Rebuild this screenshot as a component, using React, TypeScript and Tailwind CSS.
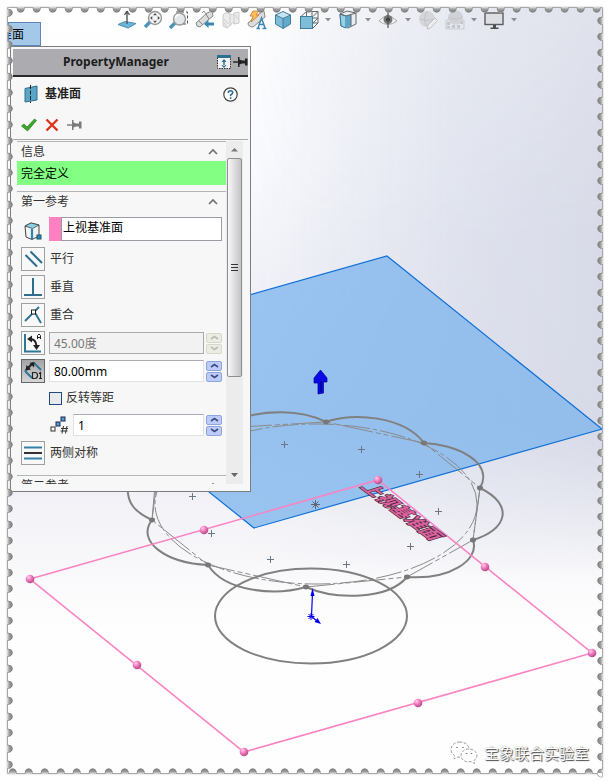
import React from "react"
import clsx from "clsx"

const WIDTH = 609
const HEIGHT = 781
const LEFT = 8
const TOP = 8
const RIGHT = 602
const BOTTOM = 773

// outline of the sheet with a round notch every 16px
const stampOutline = () => {
  let d = `M${LEFT} ${TOP}`
  for (let x = 16.7; x < RIGHT - 4; x += 16) d += `H${x}a4 4.6 0 0 0 8 0`
  d += `H${RIGHT}`
  for (let y = 16.7; y < BOTTOM - 4; y += 16) d += `V${y}a4.6 4 0 0 0 0 8`
  d += `V${BOTTOM}`
  for (let x = 584.7 + 8; x > LEFT + 8; x -= 16) d += `H${x}a4 4.6 0 0 0 -8 0`
  d += `H${LEFT}`
  for (let y = 752.7 + 16; y > TOP + 8; y -= 16) d += `V${y}a4.6 4 0 0 0 0 -8`
  return d + "Z"
}

const outline = stampOutline()

const StampFrame: React.FC = () => (
  <svg
    className="absolute inset-0 h-full w-full pointer-events-none"
    viewBox={`0 0 ${WIDTH} ${HEIGHT}`}
    preserveAspectRatio="none"
    aria-hidden="true"
  >
    <defs>
      <clipPath id="outside">
        <path
          d={`M0 0H${WIDTH}V${HEIGHT}H0Z${outline}`}
          clipRule="evenodd"
        />
      </clipPath>
      <filter id="soft">
        <feGaussianBlur stdDeviation="1.7" />
      </filter>
    </defs>
    <g clipPath="url(#outside)">
      <rect width={WIDTH} height={HEIGHT} fill="#fff" />
      <rect
        x={LEFT}
        y={TOP}
        width={RIGHT - LEFT}
        height={BOTTOM - TOP}
        fill="#8c8c8c"
        filter="url(#soft)"
      />
      <path
        d={outline}
        fill="none"
        stroke="#6a6a6a"
        strokeOpacity="0.55"
        strokeWidth="1.6"
      />
    </g>
  </svg>
)

const nodes = [
  [326, 422],
  [424, 443],
  [480, 488],
  [473, 540],
  [407, 577],
  [306, 587],
  [208, 565],
  [152, 520],
]

const crosses = [
  [284, 444],
  [361, 449],
  [419, 474],
  [438, 511],
  [410, 546],
  [346, 564],
  [270, 559],
  [211, 533],
  [192, 496],
]

const handles = [
  [30, 579],
  [204, 530],
  [378, 480],
  [485, 567],
  [592, 653],
  [418, 703],
  [244, 752],
  [137, 665],
]

const Scene: React.FC = () => (
  <svg
    className="absolute inset-0 h-full w-full"
    viewBox={`0 0 ${WIDTH} ${HEIGHT}`}
    preserveAspectRatio="xMinYMin slice"
    aria-hidden="true"
  >
    <defs>
      <linearGradient id="sky" x1="0" y1="0" x2="0" y2="1">
        <stop offset="0" stopColor="#fff" />
        <stop offset="0.2" stopColor="#fbfcff" />
        <stop offset="0.55" stopColor="#e9eaf3" />
        <stop offset="0.68" stopColor="#f5f5f9" />
        <stop offset="0.8" stopColor="#fefefe" />
      </linearGradient>
      <linearGradient id="side" x1="0" y1="0" x2="1" y2="0">
        <stop offset="0.4" stopColor="#d3d6e4" stopOpacity="0" />
        <stop offset="0.75" stopColor="#d8dce9" stopOpacity="0.75" />
        <stop offset="1" stopColor="#d5d8e5" stopOpacity="0.95" />
      </linearGradient>
      <linearGradient id="fade" x1="0" y1="0" x2="0" y2="1">
        <stop offset="0" stopColor="#ccc" />
        <stop offset="0.3" stopColor="#fff" />
        <stop offset="0.54" stopColor="#fff" />
        <stop offset="0.74" stopColor="#000" />
      </linearGradient>
      <mask id="fadeMask">
        <rect width={WIDTH} height={HEIGHT} fill="url(#fade)" />
      </mask>
      <radialGradient id="ball" cx="0.35" cy="0.3" r="0.8">
        <stop offset="0" stopColor="#ffd0ec" />
        <stop offset="0.4" stopColor="#f47fc0" />
        <stop offset="1" stopColor="#a83c7c" />
      </radialGradient>
    </defs>
    <rect width={WIDTH} height={HEIGHT} fill="url(#sky)" />
    <rect
      width={WIDTH}
      height={HEIGHT}
      fill="url(#side)"
      mask="url(#fadeMask)"
    />

    <path
      d="M387 256L602 429L254 528L38 355Z"
      fill="#7db4ec"
      fillOpacity="0.76"
      stroke="#1070d8"
      strokeWidth="1.2"
    />

    {/* construction lines */}
    <g fill="none" stroke="#8b8b8b" strokeWidth="1">
      <ellipse
        cx="316"
        cy="504"
        rx="161"
        ry="80"
        strokeDasharray="26 3 4 3"
      />
      <path
        d="M240 427L326 422L424 443L480 488L473 540L407 577L306 587L208 565L152 520L155 485"
        strokeDasharray="32 3 5 3 5 3"
      />
      <path d="M480 488L473 540M152 520L156 488" />
    </g>

    {/* flower profile and base circle */}
    <g fill="none" stroke="#808080" strokeWidth="2">
      <path d="M240 419C262 410 301 409 326 422C352 412 404 416 424 443C455 444 495 462 480 488C515 505 507 530 473 540C480 560 450 580 407 577C388 600 335 600 306 587C275 596 225 592 208 565C165 563 136 541 152 520C135 512 126 503 128 485" />
      <ellipse cx="311" cy="616" rx="96" ry="47.5" />
    </g>
    {nodes.map(([x, y]) => (
      <ellipse key={`${x}-${y}`} cx={x} cy={y} rx="3" ry="2.4" fill="#777" />
    ))}
    {crosses.map(([x, y]) => (
      <path
        key={`${x}-${y}`}
        d={`M${x - 3} ${y + 0.5}h7M${x + 0.5} ${y - 3}v7`}
        stroke="#6d7684"
        strokeWidth="1"
      />
    ))}
    <path
      d="M311 504.500h9M315.500 500v9M312.500 501.500l6 6M318.500 501.500l-6 6"
      stroke="#5f6670"
    />

    <path
      d="M30 579L378 480L592 653L244 752Z"
      fill="none"
      stroke="#fd82c2"
      strokeWidth="1.6"
    />
    {handles.map(([x, y]) => (
      <circle key={`${x}-${y}`} cx={x} cy={y} r="4.3" fill="url(#ball)" />
    ))}

    {/* plane label lies in the plane */}
    <text
      transform="matrix(0.8 0.6 -1 0.31 360 487)"
      x="0 18 36 54 72"
      className="font-['Noto_Sans_CJK_SC',sans-serif] text-[18px] font-bold [paint-order:stroke]"
      fill="#dd62a0"
      stroke="#4a2a3c"
      strokeWidth="1.6"
    >
      上视基准面
    </text>

    <path
      d="M320.500 370L327 378V382H323.500V393L318 394V383H314V378Z"
      fill="#0a0ae8"
      stroke="#000090"
      strokeWidth="0.7"
    />
    <path d="M321 381V392" stroke="#000060" />
    <g stroke="#0000f0" fill="#0000f0">
      <path d="M311.500 616L312.500 593M311 616L317 621" strokeWidth="1.2" />
      <path d="M312.500 588L314.500 596H310.500Z" stroke="none" />
      <path d="M321 624L314.500 622L317.500 618Z" stroke="none" />
      <path d="M307.500 616.500h7M311 613v7M308.500 614l5 5M313.500 614l-5 5" />
    </g>
  </svg>
)

interface IconProps {
  size?: number
  children: React.ReactNode
}

const Icon: React.FC<IconProps> = ({ size = 20, children }) => (
  <svg
    width={size}
    height={size}
    viewBox={`0 0 ${size} ${size}`}
    fill="none"
    className="shrink-0"
    aria-hidden="true"
  >
    {children}
  </svg>
)

const NormalToIcon = () => (
  <Icon>
    <path d="M1 14.500L8 11.500L19 13.500L11 18Z" fill="#6cb5da" stroke="#4a8fb4" />
    <path d="M10 14V2M10 1L7.500 5M10 1L12.500 5" stroke="#555" strokeWidth="1.4" />
  </Icon>
)

const ZoomFitIcon = () => (
  <Icon>
    <path d="M7 12L2 17" stroke="#4b93bb" strokeWidth="3.4" />
    <circle cx="12" cy="8" r="6.500" fill="#f3f5f6" stroke="#999" strokeWidth="1.4" />
    <path
      d="M12 3l2 2.300h-4zM12 13l2-2.300h-4zM7 8l2.300-2v4zM17 8l-2.300-2v4z"
      fill="#555"
    />
  </Icon>
)

const ZoomAreaIcon = () => (
  <Icon>
    <path d="M7 2H18.500V14H9" stroke="#555" strokeDasharray="3 2" />
    <path d="M6 13L1 18" stroke="#4b93bb" strokeWidth="3.4" />
    <circle cx="10.500" cy="9" r="6" fill="#e4e7e9" stroke="#999" strokeWidth="1.4" />
    <path d="M6.500 8a4 4 0 0 1 4-3.500" stroke="#fff" strokeWidth="1.6" />
  </Icon>
)

const PreviousViewIcon = () => (
  <Icon>
    <path
      d="M1 13L12 3L17 1L18 6L13 10L5 17Q1 17 1 13Z"
      fill="#dcdcdc"
      stroke="#888"
    />
    <path d="M11 4L14 9M4 11L8 15" stroke="#888" />
    <path d="M7 3L9 1L11 4" stroke="#999" />
    <path d="M9 14L13.500 10V12.500H19V15.500H13.500V18Z" fill="#3c87b2" />
  </Icon>
)

const SectionIcon = () => (
  <Icon>
    <path
      d="M2 5Q5 1 9 4Q12 6 13 3L18 2V13L13 14Q12 10 10 15L6 18L2 16Z"
      fill="#ececec"
      stroke="#ccc"
    />
    <path d="M9 4V15M13 3V14M3 9l4 5M3 13l3 4M14 5l3 4" stroke="#ccc" />
  </Icon>
)

const DynamicViewsIcon = () => (
  <Icon>
    <path d="M1 13L12 4L17 1L18 7L6 17Q1 17 1 13Z" fill="#dcdcdc" stroke="#888" />
    <path d="M6 1H12L9 5H12L4 12L6 6H3Z" fill="#ffc15a" stroke="#d0762c" strokeWidth="0.8" />
    <path
      d="M9.500 18.500h3.500M15.500 18.500h4M11 18L14.500 8L18 18M12.500 14.500h4"
      stroke="#3c87b2"
      strokeWidth="1.5"
    />
  </Icon>
)

const CubeIcon = () => (
  <Icon>
    <path d="M10 1.500L17.500 5L10 8.500L2.500 5Z" fill="#c5e4f0" />
    <path d="M2.500 5L10 8.500V18.500L2.500 14Z" fill="#7fbcd8" />
    <path d="M17.500 5L10 8.500V18.500L17.500 14Z" fill="#62a9ca" />
    <path
      d="M10 1.500L17.500 5V14L10 18.500L2.500 14V5ZM2.500 5L10 8.500L17.500 5M10 8.500V18.500"
      stroke="#3f7d9c"
    />
  </Icon>
)

const ViewOrientationIcon = () => (
  <Icon>
    <path d="M7.500 1.500H19V13H13M2 6.500L7.500 1.500M14 6.500L19 1.500M13 1.500V13M7.500 7V1.500M14 13L19 8M13 8H19M14 18L19 13" stroke="#666" />
    <rect x="1.500" y="6.500" width="12" height="12" fill="#7fbcd8" stroke="#3f7d9c" />
  </Icon>
)

const DisplayStyleIcon = () => (
  <Icon>
    <path d="M2 4L9 1L18 3V14L10 18L3 16Z" fill="#e8eff3" stroke="#666" />
    <path d="M2 4L8 6V18L3 16Z" fill="#9ad0e6" stroke="#2f7da2" />
    <path d="M8 6L13 4.500V16L8 18Z" fill="#5ba5c8" />
    <path d="M2 4L8 6L18 3M13 5V16" stroke="#666" />
  </Icon>
)

const EyeIcon = () => (
  <Icon>
    <path d="M1 11Q9 1 19 11Q10 18 1 11Z" fill="#f4f4f4" stroke="#aaa" />
    <circle cx="10" cy="9.500" r="4.500" fill="#777" />
    <circle cx="10" cy="9.500" r="2" fill="#333" />
    <path d="M10 1V18" stroke="#555" strokeWidth="1.2" />
  </Icon>
)

const AppearanceIcon = () => (
  <Icon>
    <circle cx="9" cy="9" r="8" fill="#d4d6dc" />
    <path d="M1.500 9Q9 12 17 9M9 1Q5 8 8 16" stroke="#c2c4ca" />
    <path d="M9 19L10 15L17 8L19.500 10.500L12.500 18Z" fill="#eee" stroke="#bfc1c8" />
  </Icon>
)

const SceneIcon = () => (
  <Icon>
    <path d="M1 10H19V19H1Z" fill="#e6e8ee" stroke="#c9cbd2" />
    <path d="M2 12h3v3h-3zM7 15h3v3h-3zM12 15h3v3h-3zM15 11h3v3h-3zM2 16h3v2h-3z" fill="#c3c5cc" />
    <circle cx="10.500" cy="7.500" r="7.300" fill="#d0d2d8" />
    <path d="M3.500 7.500Q10 11 17.500 7" stroke="#c0c2c9" />
  </Icon>
)

const MonitorIcon = () => (
  <Icon>
    <rect x="1" y="3" width="18" height="11.500" fill="#dcdee2" stroke="#5d5d5d" strokeWidth="1.4" />
    <path d="M9 15h3v2.500h2.500v1.500h-8v-1.500h2.500z" fill="#4d4d4d" />
  </Icon>
)

const Caret: React.FC<{ label: string }> = ({ label }) => (
  <button className="flex h-6 w-3 items-center justify-center" aria-label={label}>
    <svg width="6" height="4" viewBox="0 0 6 4">
      <path d="M0 0h6L3 3.500z" fill="#8d8f94" />
    </svg>
  </button>
)

interface ToolProps {
  label: string
  wide?: boolean
  children: React.ReactNode
}

const Tool: React.FC<ToolProps> = ({ label, wide, children }) => (
  <button
    aria-label={label}
    className={clsx(
      "flex h-6 items-center justify-center",
      wide ? "w-7" : "w-[26px]"
    )}
  >
    {children}
  </button>
)

const Toolbar: React.FC = () => (
  <nav className="ml-[73px] flex">
    <Tool label="正视于"><NormalToIcon /></Tool>
    <Tool label="整屏显示"><ZoomFitIcon /></Tool>
    <Tool label="局部放大"><ZoomAreaIcon /></Tool>
    <Tool label="上一视图"><PreviousViewIcon /></Tool>
    <Tool label="剖面视图"><SectionIcon /></Tool>
    <Tool label="动态注解视图"><DynamicViewsIcon /></Tool>
    <Tool label="等轴测"><CubeIcon /></Tool>
    <Tool label="视图定向"><ViewOrientationIcon /></Tool>
    <Caret label="视图定向选项" />
    <Tool wide label="显示样式"><DisplayStyleIcon /></Tool>
    <Caret label="显示样式选项" />
    <Tool wide label="隐藏/显示项目"><EyeIcon /></Tool>
    <Caret label="隐藏/显示选项" />
    <Tool wide label="编辑外观"><AppearanceIcon /></Tool>
    <Tool label="应用布景"><SceneIcon /></Tool>
    <Caret label="布景选项" />
    <Tool wide label="视图设定"><MonitorIcon /></Tool>
    <Caret label="视图设定选项" />
  </nav>
)

const Pin: React.FC<{ color: string }> = ({ color }) => (
  <svg width="15" height="10" viewBox="0 0 15 10" aria-hidden="true">
    <path d="M0 5h5" stroke={color} strokeWidth="1.4" />
    <path d="M5 0h1.500v2.500L9 3.500h3V1.500h2.500v7H12V6.500H9L6.500 7.500V10H5z" fill={color} />
  </svg>
)

const Chevron: React.FC = () => (
  <svg width="10" height="7" viewBox="0 0 10 7" fill="none" aria-hidden="true">
    <path d="M1 6L5 2L9 6" stroke="#6e6e6e" strokeWidth="1.6" />
  </svg>
)

const SectionHeader: React.FC<{ title: string }> = ({ title }) => (
  <button className="flex h-5 w-full items-center justify-between border-t border-[#b5b5b5] pl-1 pr-2 text-left">
    <span>{title}</span>
    <Chevron />
  </button>
)

interface RelationProps {
  label: string
  pressed?: boolean
  children: React.ReactNode
}

const RelationButton: React.FC<RelationProps> = ({
  label,
  pressed,
  children,
}) => (
  <button
    aria-label={label}
    aria-pressed={pressed ?? false}
    className={clsx(
      "flex h-6 w-6 shrink-0 items-center justify-center border",
      pressed
        ? "border-[#666] bg-linear-to-b from-[#a4a4a6] to-[#d6d6d8]"
        : "border-[#a0a0a0] bg-[#f8f8f8]"
    )}
  >
    {children}
  </button>
)

const Spinner: React.FC<{ label: string; disabled?: boolean }> = ({
  label,
  disabled,
}) => (
  <div className="ml-0.5 flex w-4 shrink-0 flex-col gap-px">
    {["M1 4L4.500 1.500L8 4", "M1 1L4.500 3.500L8 1"].map((d, i) => (
      <button
        key={d}
        disabled={disabled}
        aria-label={label + (i === 0 ? "增加" : "减少")}
        className={clsx(
          "flex h-2.5 items-center justify-center rounded-xs border",
          disabled
            ? "border-[#d8d8c8] bg-[#ecece6]"
            : "border-[#8ca6dc] bg-[#bccbfb]"
        )}
      >
        <svg width="9" height="5" viewBox="0 0 9 5" fill="none">
          <path
            d={d}
            stroke={disabled ? "#bcbcb0" : "#3c4d7c"}
            strokeWidth="1.6"
          />
        </svg>
      </button>
    ))}
  </div>
)

const ParallelIcon = () => (
  <Icon>
    <path d="M7.500 2.500L19 14M2.500 6L14 17.500" stroke="#2d6d8d" strokeWidth="2" />
  </Icon>
)

const PerpendicularIcon = () => (
  <Icon>
    <path d="M10 1V18M1 18H19" stroke="#2d6d8d" strokeWidth="2" />
  </Icon>
)

const CoincidentIcon = () => (
  <Icon>
    <path d="M2 16L16 2M11 6L18 18" stroke="#2d7797" strokeWidth="2" />
    <rect x="8.500" y="5" width="4" height="4" fill="#fff" stroke="#222" />
  </Icon>
)

const AngleIcon = () => (
  <Icon>
    <path d="M2 1V18.500H18" stroke="#2d7797" strokeWidth="2" />
    <path d="M7 6Q13 6 13.500 13" stroke="#222" strokeWidth="2" />
    <path d="M4 6L9 2.500V9.500ZM13.500 17L10 12H17Z" fill="#222" />
    <path d="M14.500 6V2.500L16 1L17.500 2.500V6M14.500 4.500h3" stroke="#222" />
  </Icon>
)

const DistanceIcon = () => (
  <Icon>
    <path d="M2 10L9 17M11 2L18 9M2 10L5 7" stroke="#2d7797" strokeWidth="2" />
    <path d="M4 8L10 2" stroke="#222" strokeWidth="2.200" />
    <path d="M2.500 9.500L3.500 4L8 8.500ZM11.500 1L6.500 2L11 6.500Z" fill="#222" />
    <path
      d="M9.500 11.500H12Q14.500 11.500 14.500 14.500T12 17.500H9.500ZM16 12.500L17.500 11.500V17.500M16 17.500H19"
      stroke="#222"
      strokeWidth="1.200"
    />
  </Icon>
)

const SymmetricIcon = () => (
  <Icon>
    <path d="M1 4.500H19M1 15.500H19" stroke="#3284a6" strokeWidth="2" />
    <path d="M1 10H19" stroke="#333" strokeWidth="2" />
  </Icon>
)

const InstancesIcon = () => (
  <Icon>
    <rect x="2" y="12" width="4" height="4" fill="#fff" stroke="#333" />
    <rect x="7" y="7" width="4" height="4" fill="#4aa3c9" stroke="#225" />
    <rect x="12" y="2" width="4" height="4" fill="#4aa3c9" stroke="#225" />
    <path d="M14.500 11L13 18.500M18 11L16.500 18.500M12 13.500H19M11.500 16H18.500" stroke="#333" />
  </Icon>
)

const ReferenceIcon = () => (
  <Icon>
    <path d="M2 5L8 2L16 4V15L9 18.500L3 16Z" fill="#f2f2f2" stroke="#444" />
    <path d="M2 5L8 2L16 4L9.500 7.500Z" fill="#8cd0ea" stroke="#444" strokeWidth="0.8" />
    <path d="M9 8V18" stroke="#2787b4" strokeWidth="2.200" />
    <rect x="14" y="14" width="4" height="4" fill="#2787b4" stroke="#1a5674" />
  </Icon>
)

const textBox =
  "h-[22px] min-w-0 flex-1 border border-[#e2e2e6] border-t-[#aaacb4] bg-white px-1 text-xs text-black"

const PropertyManager: React.FC = () => (
  <section className="ml-0.5 w-[241px] border border-[#7d7d7d] bg-[#f7f7f7] p-0.5 text-[#333]">
    <header className="flex h-7 items-center border-b-2 border-[#2a2a2a] bg-[#acacb0]">
      <h1 className="flex-1 pl-[50px] text-xs font-bold text-[#1c1c1c]">
        PropertyManager
      </h1>
      <button aria-label="展开" className="mr-0.5">
        <svg width="14" height="14" viewBox="0 0 14 14" fill="none">
          <rect x="0.500" y="1.500" width="13" height="12" fill="#f2f2f2" stroke="#333" strokeDasharray="1.500 1" />
          <rect width="14" height="3" fill="#2c6f90" />
          <path d="M7 4l2.500 3h-5zM7 13l2.500-3h-5zM6.300 6h1.400v5H6.300z" fill="#2c6f90" />
        </svg>
      </button>
      <button aria-label="固定面板">
        <Pin color="#222" />
      </button>
    </header>

    <div className="flex h-[34px] items-center pl-2.5 pr-2.5">
      <svg width="16" height="18" viewBox="0 0 16 18" fill="none" aria-hidden="true">
        <path d="M2 3.500L14 1V15L2 17Z" fill="#5aa5c6" stroke="#2e708f" />
        <path d="M7.500 0V18" stroke="#222" strokeDasharray="4 1.500" />
      </svg>
      <h2 className="flex-1 pl-1.5 text-xs font-bold text-[#222]">基准面</h2>
      <button aria-label="帮助">
        <svg width="15" height="15" viewBox="0 0 15 15" fill="none">
          <circle cx="7.500" cy="7.500" r="6.700" fill="#fff" stroke="#444" strokeWidth="1.200" />
          <path
            d="M5.300 6Q5.300 3.800 7.500 3.800T9.700 5.800Q9.700 7 7.600 8.200V9.300M7.600 10.300V12"
            stroke="#2d6d8d"
            strokeWidth="1.600"
          />
        </svg>
      </button>
    </div>

    <div className="flex h-7 items-center gap-2 border-b border-[#a8a8a8] box-content pl-2">
      <button aria-label="确定">
        <svg width="16" height="14" viewBox="0 0 16 14" fill="none">
          <path d="M0.500 8L3 6L6 9L13.500 1L15.500 2.500L6.500 13Z" fill="#3fa62c" stroke="#2a7a1c" strokeWidth="0.700" />
        </svg>
      </button>
      <button aria-label="取消">
        <svg width="14" height="14" viewBox="0 0 14 14" fill="none">
          <path d="M1.500 1.500L12.500 12.500M12.500 1.500L1.500 12.500" stroke="#e0341a" strokeWidth="2.400" />
        </svg>
      </button>
      <button aria-label="保持可见">
        <Pin color="#7a7a7a" />
      </button>
    </div>

    <div className="mb-[5px] mr-[5px] mt-px flex h-[343px] overflow-hidden pl-1">
      <div className="min-w-0 flex-1 text-xs">
        <SectionHeader title="信息" />
        <p className="mb-1.5 flex h-6 items-center bg-[#83ff83] pl-1 pt-0.5 text-black">
          完全定义
        </p>

        <SectionHeader title="第一参考" />
        <div className="flex flex-col gap-1 pl-1 pr-1 pt-1.5">
          <div className="mb-0.5 flex items-center">
            <span className="flex w-7 shrink-0 pl-0.5 pt-1">
              <ReferenceIcon />
            </span>
            <span className="h-6 w-3 shrink-0 bg-[#ff80c0]" />
            <input
              aria-label="参考"
              defaultValue="上视基准面"
              className="h-6 min-w-0 flex-1 border border-[#9a9ca4] bg-white px-px pb-1 text-xs text-black"
            />
          </div>
          <div className="flex items-center gap-[5px]">
            <RelationButton label="平行"><ParallelIcon /></RelationButton>
            平行
          </div>
          <div className="flex items-center gap-[5px]">
            <RelationButton label="垂直"><PerpendicularIcon /></RelationButton>
            垂直
          </div>
          <div className="flex items-center gap-[5px]">
            <RelationButton label="重合"><CoincidentIcon /></RelationButton>
            重合
          </div>
          <div className="flex items-center">
            <RelationButton label="角度"><AngleIcon /></RelationButton>
            <input
              aria-label="角度值"
              disabled
              defaultValue="45.00度"
              className="ml-1 h-[22px] min-w-0 flex-1 border border-[#a8aab0] bg-[#f2f2f2] px-1 text-xs text-[#777]"
            />
            <Spinner label="角度" disabled />
          </div>
          <div className="flex items-center">
            <RelationButton label="距离" pressed><DistanceIcon /></RelationButton>
            <input
              aria-label="距离值"
              defaultValue="80.00mm"
              className={clsx(textBox, "ml-1")}
            />
            <Spinner label="距离" />
          </div>
          <label className="flex h-[22px] items-center gap-1 pl-7">
            <input
              type="checkbox"
              className="h-[13px] w-[13px] appearance-none border border-[#1e4a80] bg-[#e9eaec]"
            />
            反转等距
          </label>
          <div className="flex h-6 items-center pl-7">
            <span className="flex w-6 shrink-0">
              <InstancesIcon />
            </span>
            <input aria-label="数量" defaultValue="1" className={textBox} />
            <Spinner label="数量" />
          </div>
          <div className="flex items-center gap-[5px]">
            <RelationButton label="两侧对称"><SymmetricIcon /></RelationButton>
            两侧对称
          </div>
        </div>

        <div className="mt-2.5">
          <SectionHeader title="第二参考" />
        </div>
      </div>

      <div className="flex w-[17px] shrink-0 flex-col items-center bg-[#ececec]">
        <svg width="17" height="17" viewBox="0 0 17 17" className="shrink-0">
          <path d="M5 10.500h7L8.500 7z" fill="#777" />
        </svg>
        <div className="flex h-[219px] w-[15px] flex-col items-center justify-center gap-0.5 rounded-xs border border-[#8f8f8f] bg-linear-to-r from-[#f8f8f8] to-[#c4c4c8]">
          <span className="h-px w-[7px] bg-[#333]" />
          <span className="h-px w-[7px] bg-[#333]" />
          <span className="h-px w-[7px] bg-[#333]" />
        </div>
        <svg width="17" height="17" viewBox="0 0 17 17" className="mt-auto shrink-0">
          <path d="M5 6h7L8.500 10z" fill="#666" />
        </svg>
      </div>
    </div>
  </section>
)

const Watermark: React.FC = () => (
  <footer className="mt-auto flex items-center justify-end gap-1.5 pb-2 pr-3">
    <svg width="28" height="24" viewBox="0 0 28 24" fill="#fff" stroke="#9a9a9a" strokeWidth="1" strokeDasharray="3 1.500" aria-hidden="true">
      <path d="M10 1C4.500 1 1 4.500 1 8.500C1 11 2.500 13 4.500 14.500L4 18L7.500 16C13 17 19 14 19 8.500C19 4 15 1 10 1Z" />
      <path d="M19 8C14 8 11 11 11 14.500C11 19 16 22 21 20.500L24.500 22.500L24 19.500C26 18 27 16.500 27 14.500C27 11 23.500 8 19 8Z" />
      <path d="M7 6v1M13 6v1M16.500 12v1M21.500 12v1" stroke="#777" strokeWidth="1.500" strokeDasharray="none" />
    </svg>
    <span className="text-[15px] leading-6 text-white [text-shadow:1px_1px_1px_#444,0_0_1px_#777]">
      宝象联合实验室
    </span>
  </footer>
)

export default function App() {
  return (
    <main className="relative min-h-screen overflow-hidden bg-white font-['Noto_Sans','Noto_Sans_CJK_SC',sans-serif]">
      <Scene />
      <div className="relative flex min-h-screen flex-col p-2">
        <div className="flex h-[38px] items-start">
          <button className="mt-3.5 flex h-6 w-[33px] justify-end overflow-hidden whitespace-nowrap border border-[#5c86b8] bg-[#a4c8e8] pr-4 text-xs leading-6 text-black">
            准面
          </button>
          <Toolbar />
        </div>
        <PropertyManager />
        <Watermark />
      </div>
      <StampFrame />
    </main>
  )
}
